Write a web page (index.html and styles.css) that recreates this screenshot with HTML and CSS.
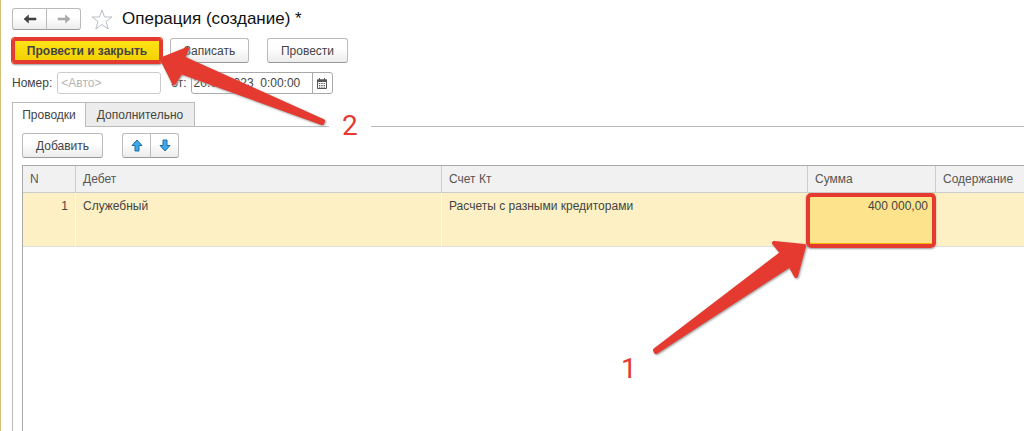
FILE: index.html
```
<!DOCTYPE html>
<html lang="ru">
<head>
	<meta charset="utf-8">
	<title>Операция (создание) *</title>
	<link rel="stylesheet" href="styles.css">
</head>
<body>
	<div id="header">
		<div class="button_group">
			<button type="button" aria-label="Назад">
				<svg width="14" height="10" viewBox="0 0 14 10"><path d="M1 5L5.500 1V4H13V6H5.500V9Z" fill="#444" stroke="#444" stroke-width=".6" /></svg>
			</button>
			<button type="button" aria-label="Вперед">
				<svg width="14" height="10" viewBox="0 0 14 10"><path d="M13 5L8.500 1V4H1V6H8.500V9Z" fill="#aaa" stroke="#aaa" stroke-width=".6" /></svg>
			</button>
		</div>
		<svg id="star" width="22" height="21" viewBox="0 0 22 21"><path d="M11 1L13.500 8H21L15 12.500L17.200 20L11 15.500L4.800 20L7 12.500L1 8H8.500Z" fill="#fff" stroke="#b8bec6" /></svg>
		<h1>Операция (создание) *</h1>
	</div>
	<div id="commands">
		<button type="button" class="primary marked">Провести и закрыть</button>
		<button type="button" id="save">Записать</button>
		<button type="button" id="post">Провести</button>
	</div>
	<div id="fields">
		<label for="number">Номер:</label>
		<input id="number" type="text" placeholder="&lt;Авто&gt;">
		<label for="date" id="date_label">от:</label>
		<div id="date_box">
			<input id="date" type="text" value="20.03.2023  0:00:00">
			<button type="button" aria-label="Календарь">
				<svg width="10" height="11" viewBox="0 0 10 11">
					<path d="M.5 2H9.500V10.500H.5Z" fill="#fff" stroke="#555" />
					<path d="M0 1.500H10V4H0ZM2 0H3V2H2ZM7 0H8V2H7Z" fill="#555" />
					<path d="M2 5.500H8.500M2 7.500H8.500M2 9.200H8.500" stroke="#555" stroke-dasharray="1.300 1" />
				</svg>
			</button>
		</div>
	</div>
	<div id="tabs">
		<button type="button" class="tab active">Проводки</button>
		<button type="button" class="tab">Дополнительно</button>
	</div>
	<div id="panel">
		<div id="toolbar">
			<button type="button" id="add">Добавить</button>
			<div class="button_group">
				<button type="button" aria-label="Вверх">
					<svg width="12" height="13" viewBox="0 0 12 13"><path d="M6 1L11 6.500H8V12H4V6.500H1Z" fill="#3fa9ec" stroke="#1d6fa5" stroke-linejoin="round" /></svg>
				</button>
				<button type="button" aria-label="Вниз">
					<svg width="12" height="13" viewBox="0 0 12 13"><path d="M6 12L11 6.500H8V1H4V6.500H1Z" fill="#3fa9ec" stroke="#1d6fa5" stroke-linejoin="round" /></svg>
				</button>
			</div>
		</div>
		<div id="grid">
			<table>
				<thead>
					<tr>
						<th class="col_n">N</th>
						<th class="col_account">Дебет</th>
						<th class="col_account">Счет Кт</th>
						<th class="col_sum">Сумма</th>
						<th>Содержание</th>
					</tr>
				</thead>
				<tbody>
					<tr>
						<td class="number">1</td>
						<td>Служебный</td>
						<td>Расчеты с разными кредиторами</td>
						<td class="number current">400 000,00</td>
						<td></td>
					</tr>
				</tbody>
			</table>
		</div>
	</div>

	<!-- step arrows -->
	<svg id="steps" width="1024" height="431" viewBox="0 0 1024 431">
		<path d="M329 122H371V130H329Z" fill="#fff" />
		<g class="arrow">
			<path d="M162 59L187 49L183 58L323 121L322 123L181 72L174 83Z" />
			<path d="M804 246L774 243L782 253L655 350L656 352L790 265L796 276Z" />
		</g>
		<text x="342" y="135">2</text>
		<text x="621" y="378">1</text>
	</svg>
</body>
</html>
```

FILE: styles.css
```
* {
	box-sizing: border-box;
}
body {
	display: flex;
	flex-direction: column;
	min-height: 100vh;
	margin: 0;
	padding: 8px 0 0 11px;
	border-left: 1px solid #d3c17b;
	background-color: white;
	color: #444;
	font: 12px/16px "Liberation Sans", Arial, sans-serif;
	overflow-x: hidden;
}
button, input {
	color: #444;
	font: inherit;
}
button {
	height: 25px;
	padding: 0;
	border: 1px solid #bbb;
	border-bottom-color: #999;
	border-radius: 3px;
	background: linear-gradient(#fff 40%, #ececec);
}
svg {
	display: block;
}

.button_group {
	display: flex;
}
.button_group button {
	display: flex;
	align-items: center;
	justify-content: center;
}
.button_group button:first-child {
	border-radius: 3px 0 0 3px;
}
.button_group button:last-child {
	margin-left: -1px;
	border-radius: 0 3px 3px 0;
}

#header {
	display: flex;
	align-items: center;
	height: 22px;
}
#header button {
	width: 35px;
	height: 22px;
}
#star {
	margin-left: 10px;
}
h1 {
	margin: 0 0 0 9px;
	color: #111;
	font-size: 17px;
	font-weight: normal;
}

#commands {
	display: flex;
	margin-top: 8px;
}
.primary {
	width: 150px;
	background: linear-gradient(#ffe61a, #f2cf00);
	font-weight: bold;
}
.marked {
	border: 0;
	box-shadow: inset 0 0 0 3px #e53a30, 0 0 0 1px #e53a30, 0 2px 2px #999;
}
#save {
	width: 79px;
	margin-left: 8px;
}
#post {
	width: 81px;
	margin-left: 18px;
}

#fields {
	display: flex;
	align-items: center;
	height: 22px;
	margin-top: 9px;
}
#number {
	width: 104px;
	height: 22px;
	margin-left: 5px;
	padding: 0 3px;
	border: 1px solid #ccc;
	border-radius: 3px;
}
#number::placeholder {
	color: #b5b5b5;
}
#date_label {
	margin: 0 4px 0 10px;
}
#date_box {
	display: flex;
	width: 142px;
	height: 22px;
	border: 1px solid #aaa;
	border-radius: 3px;
}
#date {
	flex: 1;
	min-width: 0;
	padding: 0 2px;
	border: 0;
	background: none;
	white-space: pre;
}
#date_box button {
	display: flex;
	align-items: center;
	justify-content: center;
	width: 20px;
	height: 20px;
	border: 0;
	border-left: 1px solid #aaa;
	border-radius: 0;
	background: none;
}

#tabs {
	display: flex;
	margin-top: 8px;
}
.tab {
	width: 110px;
	height: 24px;
	border: 1px solid #bbb;
	border-bottom: 0;
	border-radius: 0;
	background: #ececec;
}
.tab + .tab {
	margin-left: -1px;
}
.tab.active {
	position: relative;
	width: 74px;
	height: 25px;
	margin-bottom: -1px;
	background: white;
}

#panel {
	display: flex;
	flex: 1;
	flex-direction: column;
	padding: 6px 0 0 9px;
	border-top: 1px solid #bbb;
	border-left: 1px solid #bbb;
}
#toolbar {
	display: flex;
	gap: 19px;
}
#add {
	width: 81px;
}
#toolbar .button_group button {
	width: 29px;
}
#grid {
	flex: 1;
	margin-top: 7px;
	border-top: 1px solid #aaa;
	border-left: 1px solid #aaa;
}
table {
	width: 100%;
	border-collapse: separate;
	border-spacing: 0;
	table-layout: fixed;
}
th {
	height: 27px;
	padding: 0 7px;
	border-right: 1px solid #ccc;
	border-bottom: 1px solid #ccc;
	background: #f1f1f1;
	color: #555;
	font-weight: normal;
	text-align: left;
}
th:last-child, td:last-child {
	border-right: 0;
}
td {
	height: 54px;
	padding: 5px 7px;
	border-right: 1px solid #fff9e6;
	border-bottom: 1px solid #ddd;
	background: #fdf0c4;
	vertical-align: top;
}
.col_n {
	width: 53px;
}
.col_account {
	width: 366px;
}
.col_sum {
	width: 128px;
}
.number {
	text-align: right;
}
.current {
	position: relative;
	background: #fde48c;
}
.current::after {
	content: "";
	position: absolute;
	inset: 0 -1px -2px -2px;
	border: 4px solid #e53a30;
	border-radius: 5px;
	box-shadow: inset 0 -1px #f0b800, 0 1px 2px #999;
}

#steps {
	position: absolute;
	top: 0;
	left: 0;
	pointer-events: none;
}
.arrow {
	fill: #e53a30;
	stroke: #e53a30;
	stroke-width: 4px;
	stroke-linejoin: round;
	filter: drop-shadow(1px 1px 1px #999);
}
#steps text {
	fill: #e53a30;
	font: 28px Roboto, sans-serif;
}
```
